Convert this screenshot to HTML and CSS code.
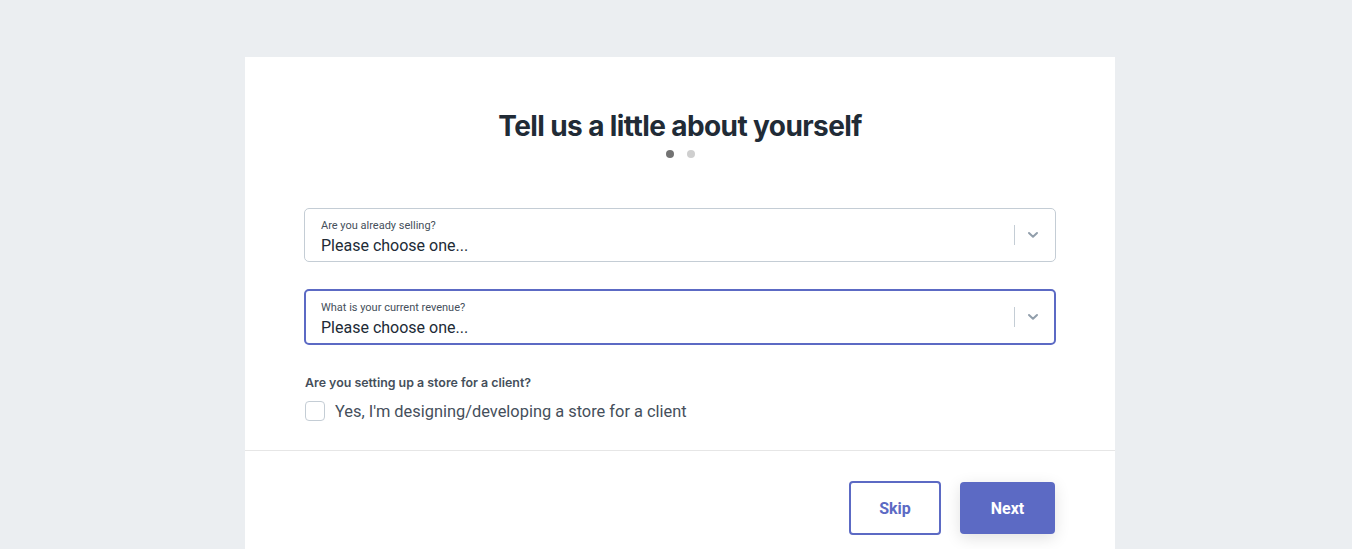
FILE: index.html
```html
<!DOCTYPE html>
<html>
<head>
<meta charset="utf-8">
<link rel="stylesheet" href="styles.css">
</head>
<body>
<div class="page">
  <div class="card">
    <div class="body">
      <h1 class="title">Tell us a little about yourself</h1>
      <div class="dots"><span class="dot active"></span><span class="dot"></span></div>
      <div class="field">
        <div class="field-text">
          <div class="field-label">Are you already selling?</div>
          <div class="field-value">Please choose one...</div>
        </div>
        <span class="sep"></span>
        <svg class="chev" width="12" height="8" viewBox="0 0 12 8"><path d="M2 2 L6 5.8 L10 2" fill="none" stroke="#919eab" stroke-width="2" stroke-linecap="round" stroke-linejoin="round"/></svg>
      </div>
      <div class="field focused">
        <div class="field-text">
          <div class="field-label">What is your current revenue?</div>
          <div class="field-value">Please choose one...</div>
        </div>
        <span class="sep"></span>
        <svg class="chev" width="12" height="8" viewBox="0 0 12 8"><path d="M2 2 L6 5.8 L10 2" fill="none" stroke="#919eab" stroke-width="2" stroke-linecap="round" stroke-linejoin="round"/></svg>
      </div>
      <div class="question">Are you setting up a store for a client?</div>
      <label class="check"><span class="box"></span><span class="check-text">Yes, I'm designing/developing a store for a client</span></label>
    </div>
    <div class="footer">
      <button class="btn skip">Skip</button>
      <button class="btn next">Next</button>
    </div>
  </div>
</div>
</body>
</html>
```
FILE: styles.css
```css
html, body { margin: 0; padding: 0; }
body { background: #ebeef1; font-family: Roboto, "Liberation Sans", sans-serif; color: #212b36; height: 549px; overflow: hidden; }
.page { display: flex; justify-content: center; padding-left: 8px; padding-top: 57px; }
.card { width: 870px; background: #fff; }
.body { padding: 51px 59px 29px; }
.title { margin: 0; text-align: center; font-family: Inter, "Noto Sans", sans-serif; font-weight: 700; font-size: 28px; line-height: 36px; letter-spacing: -0.6px; color: #212b36; }
.dots { display: flex; justify-content: center; gap: 13px; margin-top: 6px; margin-left: 1px; }
.dot { width: 8px; height: 8px; border-radius: 50%; background: #cfcfcf; }
.dot.active { background: #737373; }
.field { margin-top: 50px; height: 52px; border: 1px solid #c4cdd5; border-radius: 5px; display: flex; align-items: center; padding: 0 16px 0 16px; }
.field.focused { margin-top: 27px; border: 2px solid #5c6ac4; height: 52px; padding: 0 15px 0 15px; }
.field-text { flex: 1; padding-top: 4px; }
.field-label { font-size: 11px; line-height: 14px; color: #454f5b; }
.field-value { font-size: 16px; line-height: 20px; margin-top: 3px; color: #212b36; }
.sep { width: 1px; height: 20px; background: #c4cdd5; margin-right: 12px; }
.chev { display: block; }
.question { margin-top: 30px; font-family: Inter, "Noto Sans", sans-serif; font-size: 12.4px; font-weight: 600; color: #454f5b; line-height: 16px; margin-left: 1px; }
.check { display: flex; align-items: center; margin-top: 10px; margin-left: 1px; }
.box { width: 18px; height: 18px; border: 1px solid #c4cdd5; border-radius: 4px; margin-right: 10px; }
.check-text { font-size: 16.4px; color: #454f5b; }
.footer { border-top: 1px solid #e6e6e6; display: flex; justify-content: flex-end; gap: 19px; padding: 30px 60px 0; height: 100px; }
.btn { font-family: Roboto, "Liberation Sans", sans-serif; font-weight: 700; font-size: 16px; border-radius: 4px; cursor: pointer; }
.skip { width: 92px; height: 54px; background: #fff; border: 2px solid #5c6ac4; color: #5c6ac4; }
.next { width: 95px; height: 52px; margin-top: 1px; background: #5c6ac4; border: none; color: #fff; box-shadow: 0 4px 16px rgba(0,0,0,0.12); }
```
